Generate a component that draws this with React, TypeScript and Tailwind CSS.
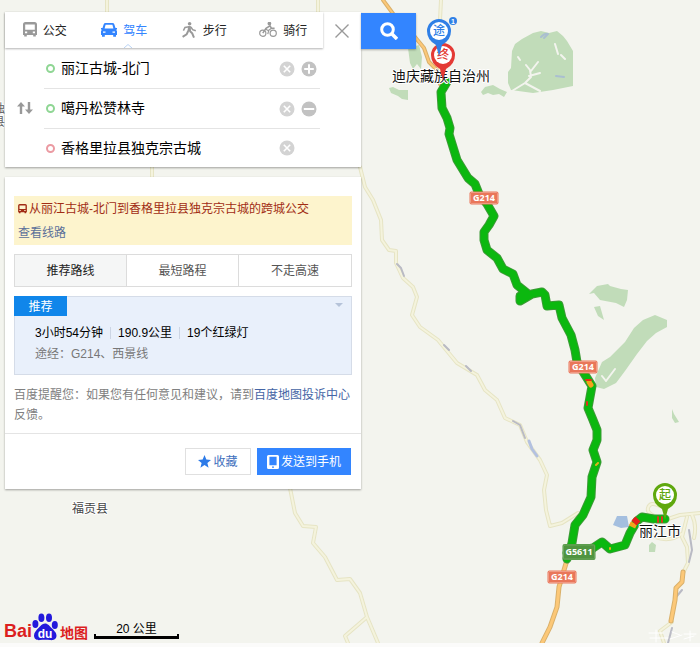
import React, { useState } from "react";
import clsx from "clsx";

const TAB_NAMES = ["公交", "驾车", "步行", "骑行"];

const routes = [
  { title: "推荐路线" },
  { title: "最短路程" },
  { title: "不走高速" },
];

const stops = [
  { id: "from", label: "起点", value: "丽江古城-北门", ring: "border-[#8fd694]", action: "add" },
  { id: "via", label: "途经点", value: "噶丹松赞林寺", ring: "border-[#8fd694]", action: "remove" },
  { id: "to", label: "终点", value: "香格里拉县独克宗古城", ring: "border-[#eb9aa2]", action: "" },
];

const BusIcon = ({ className }: { className?: string }) => (
  <svg className={className} viewBox="0 0 14 16" fill="currentColor">
    <path
      fillRule="evenodd"
      d="M2.5 0h9Q14 0 14 2.5V13h-1.2v1.6h-2.6V13H3.8v1.6H1.2V13H0V2.5Q0 0 2.5 0zM2.2 2.4v5.4h9.6V2.4zM2 9.6v1.6h2.2V9.6zM9.8 9.6v1.6H12V9.6z"
    />
  </svg>
);

const CarIcon = () => (
  <svg className="h-4 w-4" viewBox="0 0 16 16" fill="currentColor">
    <path
      fillRule="evenodd"
      d="M4.600 1h6.800q1.500 0 2 1.400L14.500 6H16v1.300l-.8.4.8 1.500V13h-1v1.800h-2.800V13H3.800v1.800H1V13H0V9.200l.8-1.500L0 7.300V6h1.500l1.100-3.600Q3.100 1 4.600 1zm0 1.700L3.600 6.400h8.800l-1-3.700zM2 9.400v1.300h2.500V9.400zm9.500 0v1.300H14V9.400z"
    />
  </svg>
);

const WalkIcon = () => (
  <svg className="h-4 w-4" viewBox="0 0 16 16" fill="none" stroke="currentColor" strokeWidth="1.500">
    <circle cx="8.600" cy="1.800" r="1.800" fill="currentColor" stroke="none" />
    <path d="M7.200 4.200h2.600l.2 5.200H6.400z" fill="currentColor" stroke="none" />
    <path d="M2.400 8.600 4 5.400 8 4.700l2.200.6 1.400 2.300 3.200 1.200" />
    <path d="M8.800 9 11.200 11.400 13 15.600" strokeWidth="2" />
    <path d="M7.200 9 5.600 12.400 1.600 14.800" strokeWidth="2" />
  </svg>
);

const BikeIcon = () => (
  <svg className="h-4 w-[18px]" viewBox="0 0 18 16" fill="none" stroke="currentColor" strokeWidth="1.2">
    <circle cx="3.8" cy="11.2" r="3.1" />
    <circle cx="14.2" cy="11.2" r="3.1" />
    <circle cx="10.4" cy="1.6" r="1.3" fill="currentColor" />
    <path d="M3.8 11.2 7 6.4l4-2.6 1.4 2.4h3.2" strokeWidth="1.5" />
    <path d="m6.4 7 3.2 1.8-.8 3.4M9.4 8.400l2.800-1.800" />
  </svg>
);

const TAB_ICONS = [<BusIcon className="h-4 w-[14px]" />, <CarIcon />, <WalkIcon />, <BikeIcon />];

// grey round buttons next to the stops
const RoundIcon = ({ type }: { type: string }) => (
  <svg className="h-4 w-4" viewBox="0 0 16 16" stroke="#fff" strokeWidth="2">
    <circle cx="8" cy="8" r="7.5" fill={type === "clear" ? "#d3d3d3" : "#c2c2c2"} stroke="none" />
    {type === "clear" && <path d="m4.8 4.8 6.4 6.4M11.2 4.8l-6.4 6.4" strokeWidth="1.6" />}
    {type === "add" && <path d="M8 3.2v9.6M3.2 8h9.6" />}
    {type === "remove" && <path d="M2.8 8h10.4" />}
  </svg>
);

const SwapIcon = () => (
  <svg className="h-3 w-4" viewBox="0 0 16 12" fill="#999">
    <path d="M4 0 8 4.4H5.2V12H2.8V4.4H0zM12 12 8 7.6h2.8V0h2.4v7.6H16z" />
  </svg>
);

const Shield = ({ x, y, text, green }: { x: number; y: number; text: string; green?: boolean }) => {
  const w = green ? 33 : 29;
  const h = green ? 16 : 13;
  return (
    <g>
      <rect x={x - w / 2} y={y - h / 2} width={w} height={h} rx="2" fill={green ? "#4f9440" : "#e9765a"} />
      <rect
        x={x - w / 2 + 1}
        y={y - h / 2 + 1}
        width={w - 2}
        height={h - 2}
        rx="1"
        fill="none"
        stroke={green ? "#6ba65b" : "#f09a84"}
      />
      <text x={x} y={y + 3} textAnchor="middle" fontSize="9" fontWeight="700" fill="#fff" fontFamily="'Noto Sans', sans-serif">
        {text}
      </text>
    </g>
  );
};

const Pin = ({ x, y, text, color }: { x: number; y: number; text: string; color: string }) => (
  <g>
    <path
      d={`M${x} ${y + 25}l-3-11Q${x - 12} ${y + 9} ${x - 12} ${y}a12 12 0 0 1 24 0Q${x + 12} ${y + 9} ${x + 3} ${y + 14}z`}
      fill={color}
    />
    <circle cx={x} cy={y} r="9" fill="#fff" />
    <text x={x} y={y + 4} textAnchor="middle" fontSize="12" fontWeight="500" fill={color}>
      {text}
    </text>
  </g>
);

const countyRoads = [
  "M107 0V14M318 0V14M152 165V180M441 0 440 20",
  "M360 167 365 187 373 200 381 220 382 240 389 250 396 251 396 263 403 278 413 287 417 297 412 315 420 327 438 340 457 363 477 375 485 390 497 400 505 418 520 425 527 442 540 460 547 475 544 490 546 510 550 526 562 523 578 513",
  "M290 488 295 513 303 526 316 527 313 543 325 557 337 580 350 579 360 593 367 617 378 643M367 617 345 636 348 643",
  "M668 519 680 515 700 513M687 517 682 537 687 547 688 563 683 573M664 519Q646 515 648 508T660 506M655 537Q670 543 683 533M672 622 660 631 664 643M692 515Q697 525 694 538",
];

const mainRoad =
  "M447 82 441 92 442 108 447 118 450 128 449 134 453 147 457 160 468 178 475 184 479 194 487 204 494 216 489 225 484 232 484 240 487 250 497 258 503 269 513 274 517 285 527 293 520 296 520 301 532 294 542 292 545 295 547 306 559 305 562 318 571 335 575 350 577 362 587 378 592 386 590 397 588 408 593 420 597 430 597 440 593 450 597 462 592 477 591 497 583 515 575 525 572 543 567 559";
const spurRoad = "M567 553 593 548 602 542 610 549 625 545 630 533 637 521 642 517 654 519 665 519";

const MapCanvas = () => (
  <svg className="absolute left-0 top-0" width="700" height="647" viewBox="0 0 700 647" fill="none" strokeLinejoin="round" strokeLinecap="round">
    {/* parks */}
    <g fill="#c1dcb9">
      <path d="M512 51 515 44 522 39 533 33 541 31 549 33 557 31 563 36 567 41 573 51 573 86 553 90 533 93 511 90 508 83 508 72 511 68z" />
      <path d="M481 92 485 87 493 85 500 89 507 92 504 97 499 94 493 95 488 93 483 95z" />
      <path d="M408 48 419 45 422 57 421 69 417 64 413 69 410 63zM389 88 393 87 399 90 408 90 408 100 402 99 398 96 391 93z" />
      <path d="M589 294 597 286 608 284 610 286 621 289 628 290 627 300 624 307 616 303 600 300 594 293zM594 307 600 306 604 320 598 316z" />
      <path d="M595 378 602 362 610 357 625 342 634 328 643 320 655 315 667 320 667 327 656 333 647 341 637 354 625 371 616 383 604 389 596 387z" />
      <path d="M672 409 674 414 679 422 675 423 672 418zM649 545 652 542 656 545 655 552 649 552z" />
    </g>
    <path d="M512 91 525 83 531 77 530 70 526 65M531 71 538 62M529 76 540 73M525 83 540 91M555 44l3 10M561 55l4 4M518 57l2 3M602 376l4 5M606 381l9-12" stroke="#f3f4ee" strokeWidth="2" />
    <path d="M541 37q4-4 7-3l-4 4M556 76l8 1" stroke="#aabfd0" strokeWidth="2" />
    <path d="M613 525 617 516 627 516 629 527 621 528z" fill="#a4bfdf" />

    {countyRoads.map((d, i) => (
      <g key={i}>
        <path d={d} stroke="#e6e4c4" strokeWidth="4" />
        <path d={d} stroke="#f4f3dd" strokeWidth="2" />
      </g>
    ))}
    <path d="M397 264l4 4 3 8M444 345l5 5M466 366l5 5M513 421l7 4 5 13M689 530l3 20-3 12M682 590l-5 6M672 628l-4 15" stroke="#b9bac4" strokeWidth="2" />
    <path d="M529 441l3 8 5 7" stroke="#b3c1e0" strokeWidth="3" />

    {["M383 0 394 15 415 37 424 48 429 62 437 70 440 84", "M567 560 559 587 557 607 550 627 542 643", "M683 572 682 582 676 588 675 600 671 621"].map((d, i) => (
      <g key={i}>
        <path d={d} stroke="#d9b06a" strokeWidth={i ? 5 : 4} />
        <path d={d} stroke="#fcc878" strokeWidth={i ? 3 : 2} />
      </g>
    ))}

    <g>
      <path d={mainRoad} stroke="#3d9a37" strokeWidth="9" />
      <path d={spurRoad} stroke="#3d9a37" strokeWidth="9" />
      <path d={mainRoad} stroke="#0bb80f" strokeWidth="7" />
      <path d={spurRoad} stroke="#0bb80f" strokeWidth="7" />
      <path d="M589 382l2 3" stroke="#f5a11b" strokeWidth="5" />
      <path d="M586 380h5M587 402v3" stroke="#e3301a" strokeWidth="2" />
      <path d="M598 463l-2 2M610 548v1" stroke="#e0b31e" strokeWidth="2" />
      <path d="M632 527l2-4" stroke="#f5a11b" strokeWidth="7" strokeLinecap="butt" />
      <path d="M634 523l4-4" stroke="#e3201a" strokeWidth="7" strokeLinecap="butt" />
      <path d="M658 517v5M662 517v5" stroke="#d83a1a" strokeWidth="2" />
    </g>

    <Shield x={484} y={198} text="G214" />
    <Shield x={583} y={367} text="G214" />
    <Shield x={579} y={552} text="G5611" green />
    <Shield x={562} y={577} text="G214" />

    <g fill="#111" stroke="#fff" strokeWidth="2" paintOrder="stroke">
      <text x="392" y="81" fontSize="14">迪庆藏族自治州</text>
      <text x="639" y="536" fontSize="14">丽江市</text>
      <text x="72" y="513" fontSize="12" fill="#444">福贡县</text>
      <text x="-7" y="113" fontSize="12" fill="#666">独</text>
      <text x="-7" y="126" fontSize="12" fill="#666">县</text>
    </g>

    <Pin x={443} y={55} text="终" color="#e43a35" />
    <Pin x={439} y={31} text="途" color="#2f7fe6" />
    <Pin x={665} y={495} text="起" color="#5fa80e" />
    <circle cx="453" cy="21" r="4" fill="#2f7fe6" />
    <text x="453" y="24" textAnchor="middle" fontSize="7" fontWeight="700" fill="#fff">
      1
    </text>

    <path d="M649 633h14M650 638h18M656 630v12M672 632l8 3M670 639l12-4M684 634h12M684 639l10-3M690 631v10" stroke="#fff" strokeWidth="1" />
  </svg>
);

const PawLogo = () => (
  <svg className="h-7 w-[26px]" viewBox="0 0 26 28" fill="#2319dc">
    <ellipse cx="3.4" cy="11" rx="3" ry="3.900" />
    <ellipse cx="9.4" cy="4.800" rx="3" ry="4.300" />
    <ellipse cx="17" cy="4.800" rx="3" ry="4.300" />
    <ellipse cx="22.8" cy="12" rx="3" ry="3.900" />
    <path d="M13 10.500c3 0 4.500 2.500 6.500 4.500 2 2 5 4.500 5 7.500 0 4-3.500 5-6.500 4.600-3-.4-7-.4-10 0-3 .4-6-1-6-4.600 0-3 2.500-5.500 4.500-7.500s3.500-4.500 6.500-4.500z" />
    <text x="13" y="25" textAnchor="middle" fontSize="12" fontWeight="700" fill="#fff" fontFamily="'Liberation Sans', sans-serif">
      du
    </text>
  </svg>
);

const App = () => {
  const [mode, setMode] = useState(1);
  const [plan, setPlan] = useState(0);

  return (
    <div className="relative flex min-h-screen flex-col overflow-hidden bg-[#f3f4ee] font-['Liberation_Sans','Noto_Sans_CJK_SC',sans-serif] text-xs text-[#222]">
      <MapCanvas />

      <main className="relative w-fit pl-[5px] pt-3">
        {/* search area */}
        <div className="flex items-start">
          <form className="w-[356px] bg-white shadow-[0_1px_2px_rgba(0,0,0,0.35)]">
            <div className="flex">
              <nav className="grid h-9 w-[318px] grid-cols-4 shadow-[0_1px_2px_rgba(0,0,0,0.3)]">
                {TAB_NAMES.map((name, i) => (
                  <button
                    key={name}
                    type="button"
                    onClick={() => setMode(i)}
                    className={clsx("relative flex items-center justify-center gap-1.5 pt-0.5", mode === i && "text-[#3385ff]")}
                  >
                    <span className={clsx("pb-0.5", mode === i ? "text-[#3385ff]" : "text-[#999]")}>{TAB_ICONS[i]}</span>
                    {name}
                    {mode === i && (
                      <svg className="absolute bottom-0 left-1/2 h-1 w-2" viewBox="0 0 8 4" fill="#fff" stroke="#b9d3f5">
                        <path d="M0 4 4 .5 8 4" />
                      </svg>
                    )}
                  </button>
                ))}
              </nav>
              <button type="button" aria-label="关闭" className="flex flex-1 items-center justify-center pt-0.5">
                <svg className="h-[14px] w-[14px]" viewBox="0 0 14 14" stroke="#999" strokeWidth="1.400">
                  <path d="m.5.5 13 13M13.500.5l-13 13" />
                </svg>
              </button>
            </div>
            <div className="flex">
              <button type="button" aria-label="交换起点终点" className="flex w-[39px] items-center justify-center">
                <SwapIcon />
              </button>
              <div className="w-[276px] pt-px">
                {stops.map((stop, i) => (
                  <div key={stop.id} className={clsx("flex items-center pl-0.5", i < 2 ? "h-10 border-b border-[#e4e4e4]" : "h-[38px]")}>
                    <span className={clsx("h-[9px] w-[9px] rounded-full border-2", stop.ring)} />
                    <label htmlFor={stop.id} className="sr-only">
                      {stop.label}
                    </label>
                    <input
                      id={stop.id}
                      defaultValue={stop.value}
                      className="ml-1.5 h-8 w-[218px] bg-transparent pb-[3px] text-sm text-black outline-none"
                    />
                    <button type="button" aria-label="清除">
                      <RoundIcon type="clear" />
                    </button>
                    {stop.action && (
                      <button type="button" aria-label={stop.action} className="ml-1.5">
                        <RoundIcon type={stop.action} />
                      </button>
                    )}
                  </div>
                ))}
              </div>
            </div>
          </form>
          <button aria-label="搜索" className="mt-px flex h-9 w-[55px] items-center justify-center bg-[#3385ff] shadow-[0_1px_2px_rgba(0,0,0,0.3)]">
            <svg className="h-[18px] w-[18px]" viewBox="0 0 18 18" fill="none" stroke="#fff" strokeWidth="3">
              <circle cx="7.500" cy="7.500" r="5.800" />
              <path d="m11.500 11.500 5.500 5.500" strokeWidth="3.500" />
            </svg>
          </button>
        </div>

        {/* result panel */}
        <section className="mt-[10px] w-[356px] bg-white shadow-[0_1px_2px_rgba(0,0,0,0.35)]">
          <div className="px-[9px] pt-[19px]">
            <div className="bg-[#fdf4cd] pl-1 pt-px leading-6">
              <p className="flex items-center gap-0.5 text-[#a12c14]">
                <BusIcon className="h-[10px] w-[9px]" />
                从丽江古城-北门到香格里拉县独克宗古城的跨城公交
              </p>
              <a href="#" className="block text-[#5b7099]">
                查看线路
              </a>
            </div>

            <div className="mt-[9px] grid h-[33px] grid-cols-3 divide-x divide-[#dcdcdc] border border-[#dcdcdc]">
              {routes.map((route, i) => (
                <button
                  key={route.title}
                  onClick={() => setPlan(i)}
                  className={plan === i ? "bg-[#f5f6f6] text-[#222]" : "text-[#555]"}
                >
                  {route.title}
                </button>
              ))}
            </div>

            <div className="mt-[9px] h-[79px] border border-[#d5dce8] bg-[#e9f0fb]">
              <div className="flex items-start justify-between">
                <span className="-ml-px -mt-px h-5 w-[53px] bg-[#1086ea] text-center leading-[22px] text-white">推荐</span>
                <svg className="mr-2 mt-1.5 h-1 w-2" viewBox="0 0 8 4" fill="#b6c3d9">
                  <path d="M0 0h8L4 4z" />
                </svg>
              </div>
              <div className="mt-[7px] flex h-5 items-center pl-5 text-black">
                <span>3小时54分钟</span>
                <span className="mx-[7px] h-3 w-px bg-[#ccd5e4]" />
                <span>190.9公里</span>
                <span className="mx-[7px] h-3 w-px bg-[#ccd5e4]" />
                <span>19个红绿灯</span>
              </div>
              <p className="mt-px pl-5 leading-5 text-[#777]">途经：G214、西景线</p>
            </div>

            <p className="pb-2 pt-[10px] leading-5 text-[#808080]">
              百度提醒您：如果您有任何意见和建议，请到
              <a href="#" className="text-[#4565a5]">
                百度地图投诉中心
              </a>
              反馈。
            </p>
          </div>
          <div className="flex justify-end gap-1.5 border-t border-[#e4e4e4] px-[10px] py-[14px]">
            <button className="flex h-[27px] w-[66px] items-center justify-center gap-0.5 border border-[#e0e0e0] text-[#3e6fbd]">
              <svg className="h-[13px] w-[13px]" viewBox="0 0 14 14" fill="#2d7be8">
                <path d="m7 0 2 4.900 5 .4-3.900 3.200 1.300 5.100L7 10.800l-4.400 2.800 1.300-5.100L0 5.300l5-.4z" />
              </svg>
              收藏
            </button>
            <button className="flex h-[27px] w-[94px] items-center justify-center gap-0.5 bg-[#3385ff] text-white">
              <svg className="h-[14px] w-3" viewBox="0 0 12 14" fill="#fff">
                <path fillRule="evenodd" d="M1.500 0h9Q12 0 12 1.500v11q0 1.500-1.500 1.500h-9Q0 14 0 12.500v-11Q0 0 1.500 0zM2.400 1.800v8.400h7.200V1.800zM5 11.500v1.300h2v-1.300z" />
              </svg>
              发送到手机
            </button>
          </div>
        </section>
      </main>

      <footer className="relative mt-auto flex items-end border-b-4 border-[#fbfbfa] pl-1">
        <div className="flex items-end pb-0.5 font-bold text-[#dc1f1f]">
          <span className="text-lg leading-5">Bai</span>
          <PawLogo />
          <span className="ml-0.5 text-sm leading-4">地图</span>
        </div>
        <div className="mb-1 ml-1.5 w-[85px]">
          <p className="text-center leading-[10px] text-black">20 公里</p>
          <div className="h-[5px] border-x-2 border-b-3 border-black" />
        </div>
      </footer>
    </div>
  );
};

export default App;
